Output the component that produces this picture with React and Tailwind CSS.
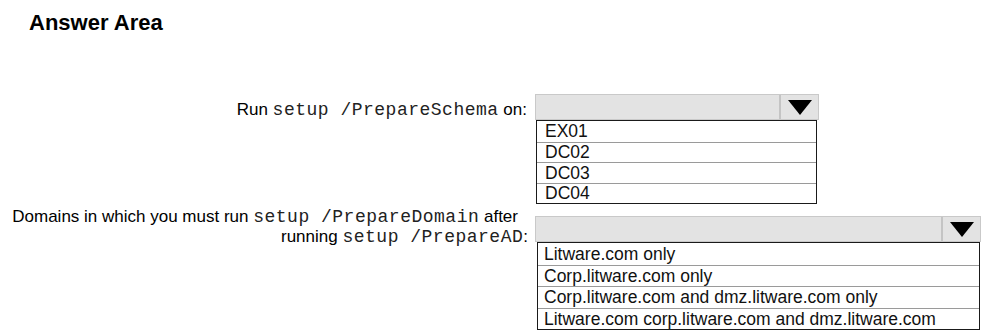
import React from "react";

const sans = "font-['Liberation_Sans',Arial,sans-serif]";
const mono = "font-['Liberation_Mono','Courier_New',monospace] text-[18px] tracking-[0.5px] text-[#222]";

function Arrow() {
  return (
    <svg width="24" height="15" viewBox="0 0 24 15" className="block">
      <polygon points="0,0 24,0 12,15" fill="#000" />
    </svg>
  );
}

function Dropdown({ width, listInset, rowH, pad, items }) {
  return (
    <div className="flex flex-col" style={{ width }}>
      <div className="flex h-[26px] bg-[#e3e3e3] border border-[#c9c9c9]">
        <div className="flex-1" />
        <div className="w-[39px] border-l-2 border-[#c4c4c4] flex items-center justify-center">
          <Arrow />
        </div>
      </div>
      <div className={`${listInset} border-[1.5px] border-[#1a1a1a] bg-white`}>
        {items.map((t, i) => (
          <div
            key={t}
            className={`${rowH} ${pad} flex items-center text-[17.5px] leading-[20px] text-[#111] whitespace-nowrap ${
              i > 0 ? "border-t border-[#9a9a9a]" : ""
            }`}
          >
            {t}
          </div>
        ))}
      </div>
    </div>
  );
}

export default function App() {
  return (
    <div className={`w-[987px] h-[335px] bg-white overflow-hidden text-black ${sans}`}>
      <h1 className="pl-[29px] pt-[10px] text-[22px] leading-[25px] font-bold">Answer Area</h1>

      <div className="mt-[59px] flex items-start">
        <div className="w-[527px] pt-[6px] leading-[20px] flex items-center justify-end text-[17px] whitespace-nowrap">
          <span>Run&nbsp;</span>
          <span className={mono}>setup /PrepareSchema</span>
          <span>&nbsp;on:</span>
        </div>
        <div className="ml-[8px]">
          <Dropdown
            width="284px"
            listInset="ml-[1px] mr-[2px]"
            rowH="h-[20.5px]"
            pad="pl-[8px]"
            items={["EX01", "DC02", "DC03", "DC04"]}
          />
        </div>
      </div>

      <div className="mt-[3px] flex items-start">
        <div className="w-[528px] text-right text-[17px] leading-[20px] whitespace-nowrap">
          <div className="pr-[10px]">
            Domains in which you must run <span className={mono}>setup /PrepareDomain</span> after
          </div>
          <div>
            running <span className={mono}>setup /PrepareAD</span>:
          </div>
        </div>
        <div className="ml-[7px] mt-[9px]">
          <Dropdown
            width="446px"
            listInset="ml-[2px] mr-[1px]"
            rowH="h-[21.5px]"
            pad="pl-[6px]"
            items={[
              "Litware.com only",
              "Corp.litware.com only",
              "Corp.litware.com and dmz.litware.com only",
              "Litware.com corp.litware.com and dmz.litware.com",
            ]}
          />
        </div>
      </div>
    </div>
  );
}
